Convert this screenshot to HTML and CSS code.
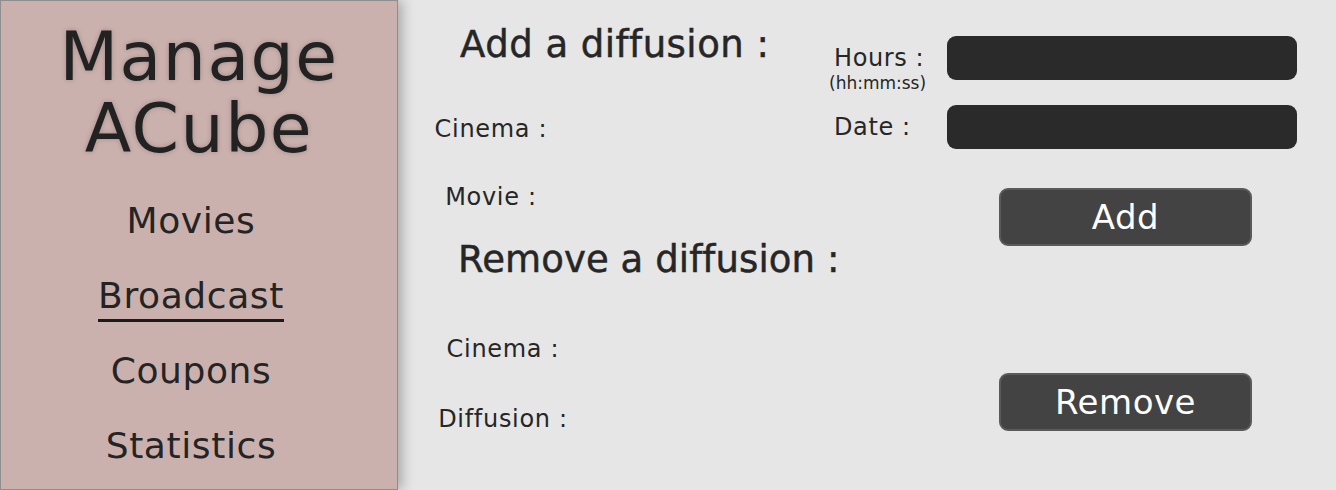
FILE: index.html
```html
<!DOCTYPE html>
<html lang="en">
<head>
<meta charset="utf-8">
<title>Manage ACube - Broadcast</title>
<link rel="stylesheet" href="styles.css">
</head>
<body>
<div class="app">
  <aside class="sidebar">
    <h1 class="brand">Manage<br>ACube</h1>
    <nav class="nav">
      <a class="nav-item" href="#">Movies</a>
      <a class="nav-item nav-item--active" href="#">Broadcast</a>
      <a class="nav-item" href="#">Coupons</a>
      <a class="nav-item" href="#">Statistics</a>
    </nav>
  </aside>
  <main class="main">
    <div class="col-left">
      <h2 class="heading heading--add">Add a diffusion :</h2>
      <div class="label label--add label--cinema">Cinema :</div>
      <div class="label label--add label--movie">Movie :</div>
      <h2 class="heading heading--remove">Remove a diffusion :</h2>
      <div class="label label--remove label--cinema2">Cinema :</div>
      <div class="label label--remove label--diffusion">Diffusion :</div>
    </div>
    <div class="col-right">
      <div class="field field--hours">
        <div class="field-label">
          <span class="label-text">Hours :</span>
          <span class="hint">(hh:mm:ss)</span>
        </div>
        <div class="input"></div>
      </div>
      <div class="field field--date">
        <div class="field-label"><span class="label-text">Date :</span></div>
        <div class="input"></div>
      </div>
      <button class="btn btn--add">Add</button>
      <button class="btn btn--remove">Remove</button>
    </div>
  </main>
</div>
</body>
</html>
```
FILE: styles.css
```css
* { box-sizing: border-box; }
html, body {
  margin: 0;
  padding: 0;
  height: 100%;
}
body {
  background: #e6e6e6;
  font-family: "DejaVu Sans", sans-serif;
  color: #232323;
  overflow: hidden;
}
.app {
  display: flex;
  height: 490px;
}
.sidebar {
  width: 398px;
  flex: none;
  height: 490px;
  background: #cbb1ae;
  border: 1px solid #8e8e8e;
  box-shadow: 4px 0 12px rgba(0, 0, 0, 0.28);
  display: flex;
  flex-direction: column;
  align-items: center;
  position: relative;
  z-index: 1;
}
.brand {
  margin: 0;
  padding-top: 20px;
  font-size: 68px;
  line-height: 72px;
  font-weight: normal;
  letter-spacing: 1.5px;
  text-align: center;
  color: #222;
  text-shadow: 0 0 5px rgba(0, 0, 0, 0.22);
}
.nav {
  margin-top: 35px;
  align-self: stretch;
  padding-right: 16px;
  display: flex;
  flex-direction: column;
  align-items: center;
  gap: 33px;
}
.nav-item {
  display: block;
  font-size: 36px;
  line-height: 42px;
  letter-spacing: 0.6px;
  color: #242424;
  text-decoration: none;
}
.nav-item--active {
  padding-bottom: 2px;
  border-bottom: 3px solid #1b1b1b;
  margin-bottom: -5px;
}
.main {
  flex: 1;
  display: flex;
  padding-top: 23px;
}
.col-left {
  width: 436px;
  flex: none;
  display: flex;
  flex-direction: column;
}
.heading {
  margin: 0;
  font-size: 37px;
  line-height: 43px;
  font-weight: normal;
  letter-spacing: 0.5px;
  white-space: nowrap;
  color: #262626;
  -webkit-text-stroke: 0.5px #262626;
}
.heading--add { padding-left: 62px; }
.heading--remove { padding-left: 60px; margin-top: 27px; letter-spacing: 0.1px; }
.label {
  font-size: 24px;
  line-height: 28px;
  letter-spacing: 0.7px;
  text-align: center;
  white-space: nowrap;
  margin-left: 22px;
  color: #262626;
}
.label--add { width: 142px; }
.label--remove { width: 166px; }
.label--cinema { margin-top: 49px; }
.label--movie { margin-top: 40px; }
.label--cinema2 { margin-top: 54px; }
.label--diffusion { margin-top: 42px; }
.col-right {
  width: 463px;
  flex: none;
  display: flex;
  flex-direction: column;
  padding-top: 13px;
}
.field {
  display: flex;
  align-items: flex-start;
}
.field--date { margin-top: 12px; }
.field-label {
  width: 113px;
  flex: none;
  margin-top: 8px;
  display: flex;
  flex-direction: column;
  align-items: flex-start;
}
.label-text {
  font-size: 24px;
  line-height: 28px;
  letter-spacing: 0.6px;
  white-space: nowrap;
  color: #262626;
}
.hint {
  font-size: 17px;
  line-height: 20px;
  margin-top: 1px;
  margin-left: -5px;
  white-space: nowrap;
  color: #262626;
}
.input {
  width: 350px;
  height: 44px;
  background: #2a2a2a;
  border-radius: 9px;
}
.btn {
  align-self: flex-start;
  margin-left: 165px;
  width: 253px;
  height: 58px;
  background: #434343;
  border: 2px solid #5a5a5a;
  border-radius: 9px;
  color: #ffffff;
  font-family: "DejaVu Sans", sans-serif;
  font-size: 34px;
  line-height: 1;
  letter-spacing: 0.5px;
  padding: 0;
  display: flex;
  align-items: center;
  justify-content: center;
}
.btn--add { margin-top: 39px; }
.btn--remove { margin-top: 127px; }
```
